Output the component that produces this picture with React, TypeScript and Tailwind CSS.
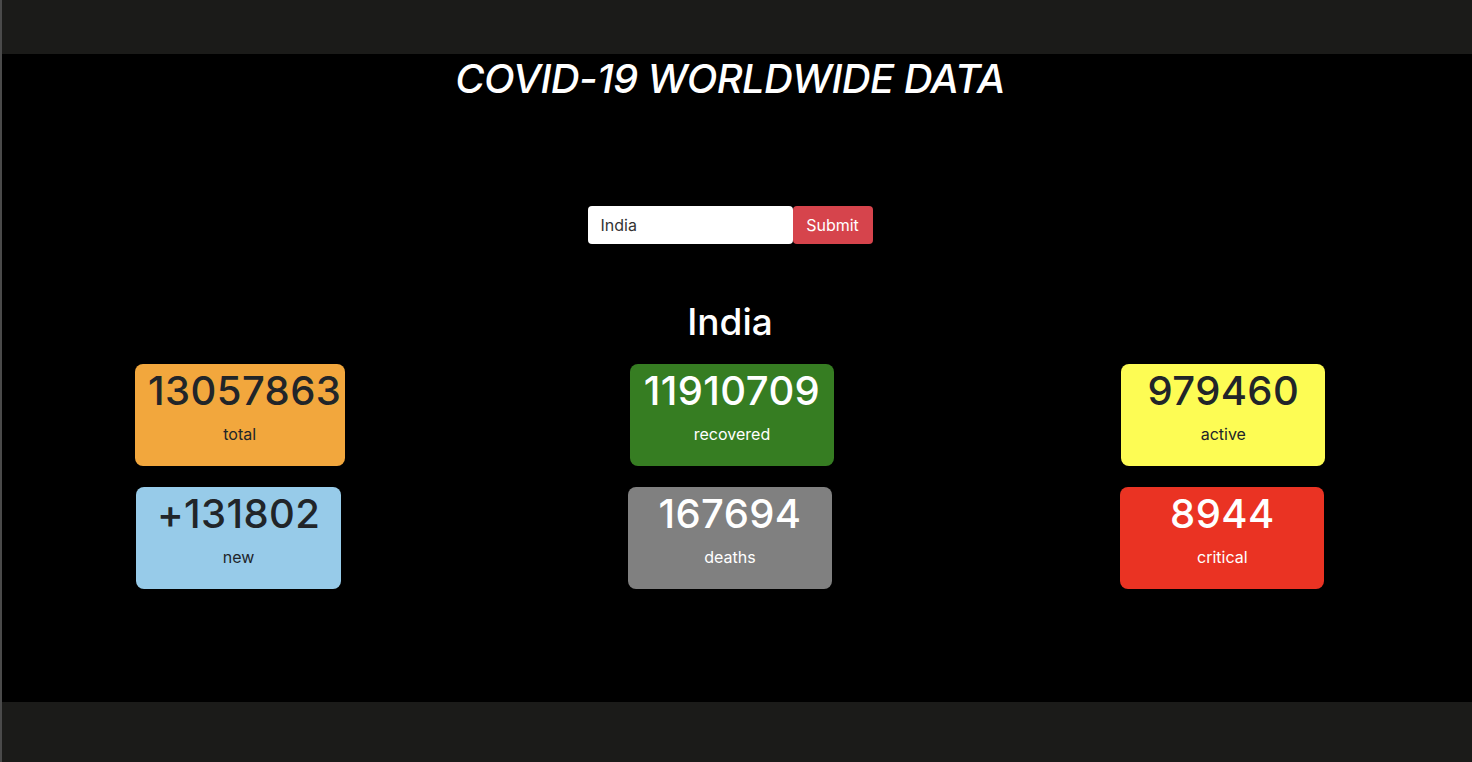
import React from "react";

const cards = [
  { value: "13057863", label: "total", bg: "bg-[#f2a73d]", text: "text-[#212529]", w: "w-[210px] ml-[2px]", n: "ml-[10px]" },
  { value: "11910709", label: "recovered", bg: "bg-[#367d22]", text: "text-white", w: "w-[204px] ml-[4px]", n: "" },
  { value: "979460", label: "active", bg: "bg-[#fdfc54]", text: "text-[#212529]", w: "w-[204px] ml-[4px]", n: "" },
  { value: "+131802", label: "new", bg: "bg-[#97cbe9]", text: "text-[#212529]", w: "w-[205px]", n: "" },
  { value: "167694", label: "deaths", bg: "bg-[#808080]", text: "text-white", w: "w-[204px]", n: "" },
  { value: "8944", label: "critical", bg: "bg-[#ea3323]", text: "text-white", w: "w-[204px] ml-[2px]", n: "" },
];

export default function App() {
  return (
    <div
      className="w-[1472px] h-[762px] bg-[#1b1b19] flex flex-col overflow-hidden"
      style={{ fontFamily: "Inter, 'Noto Sans', sans-serif" }}
    >
      <div className="h-[54px] border-l-2 border-[#4a4a4a]" />
      <div className="h-[648px] bg-black border-l-2 border-[#4a4a4a]">
        <div className="w-[1456px] flex flex-col items-center">
          <h1 className="mt-[1px] text-[40px] leading-[48px] italic font-medium text-white tracking-[-0.6px]">
            COVID-19 WORLDWIDE DATA
          </h1>
          <div className="mt-[103px] flex">
            <input
              readOnly
              value="India"
              className="w-[205px] h-[38px] bg-white rounded-[4px] px-[13px] text-[16px] text-[#333] outline-none"
            />
            <button className="w-[80px] h-[38px] bg-[#d6444c] rounded-[4px] text-white text-[16px]">
              Submit
            </button>
          </div>
          <h2 className="mt-[56px] text-[37px] leading-[44px] font-medium text-white">India</h2>
          <div className="mt-[20px] w-full grid grid-cols-3 gap-x-[18px] gap-y-[21px] justify-items-center">
            {cards.map((c, i) => (
              <div
                key={i}
                className={`${c.bg} ${c.text} ${c.w} h-[102px] rounded-[8px] flex flex-col items-center`}
              >
                <div className={`${c.n} pt-[2px] text-[40px] leading-[50px] font-medium tracking-[0.4px]`}>{c.value}</div>
                <div className="mt-[6px] text-[16px] leading-[24px]">{c.label}</div>
              </div>
            ))}
          </div>
        </div>
      </div>
      <div className="flex-1 border-l-2 border-[#4a4a4a]" />
    </div>
  );
}
